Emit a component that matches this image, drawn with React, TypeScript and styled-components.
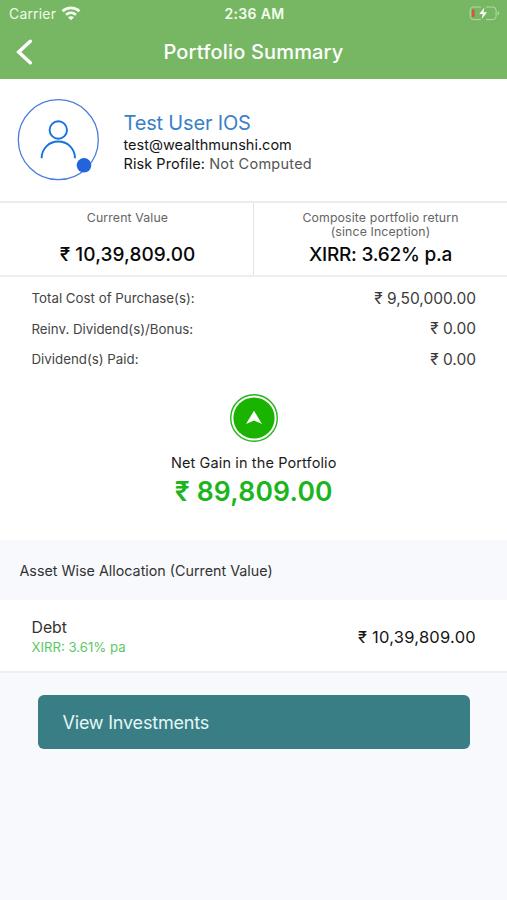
import React from "react";
import styled, { createGlobalStyle } from "styled-components";

const GlobalStyle = createGlobalStyle`
  * { box-sizing: border-box; }
  body { margin: 0; background: #f7f9fd; font-family: Inter, "Liberation Sans", sans-serif; }
`;

const Screen = styled.main`
  width: 507px;
  height: 900px;
  background: #f7f9fd;
  overflow: hidden;
`;

const Header = styled.header`
  height: 79px;
  background: #77b763;
  color: #fff;
`;

const StatusBar = styled.div`
  display: grid;
  grid-template-columns: 1fr auto 1fr;
  align-items: center;
  height: 27px;
  padding: 0 7px 0 9px;
  font-size: 14px;
`;

const Carrier = styled.div`
  display: flex;
  align-items: center;
  gap: 5px;
  letter-spacing: 0.18px;
  color: #eefbe9;
`;

const Clock = styled.time`
  font-weight: 600;
  letter-spacing: 0.35px;
  color: #f3fdee;
`;

const BatterySlot = styled.div`
  display: flex;
  justify-content: flex-end;
`;

const NavBar = styled.div`
  display: grid;
  grid-template-columns: 60px 1fr 60px;
  align-items: center;
  height: 50px;
`;

const BackButton = styled.button`
  display: flex;
  padding: 0 0 0 15px;
  border: 0;
  background: none;
  color: #fff;
`;

const Title = styled.h1`
  margin: 0;
  text-align: center;
  font-size: 20px;
  line-height: 28px;
  font-weight: 550;
  letter-spacing: 0.17px;
`;

const Profile = styled.section`
  display: flex;
  align-items: flex-start;
  height: 122px;
  padding: 20px 17px 0;
  background: #fff;
`;

const Details = styled.div`
  padding: 12px 0 0 24.5px;
  font-size: 14.5px;
  line-height: 19px;
  color: #151515;
`;

const UserName = styled.div`
  font-size: 20px;
  line-height: 25px;
  letter-spacing: -0.18px;
  color: #3a80c9;
`;

const Email = styled.div`
  line-height: 18px;
`;

const Risk = styled.div`
  letter-spacing: 0.06px;
  span { color: #555; letter-spacing: 0.25px; }
`;

const Stats = styled.section`
  display: grid;
  grid-template-columns: 253px 254px;
  height: 76px;
  border-top: 2px solid #ececec;
  border-bottom: 2px solid #eee;
  background: #fff;
`;

const Stat = styled.div`
  display: flex;
  flex-direction: column;
  justify-content: space-between;
  padding: 8px 0 8px 2px;
  text-align: center;
  & + & { padding-left: 0; border-left: 1px solid #e3e3e3; }
`;

const StatLabel = styled.div`
  font-size: 12.3px;
  line-height: 14px;
  letter-spacing: 0.13px;
  color: #656565;
`;

const StatValue = styled.div<{ $spacing: number }>`
  font-size: 19px;
  line-height: 24px;
  font-weight: 550;
  letter-spacing: ${(p) => p.$spacing}px;
  color: #080808;
`;

const Summary = styled.section`
  height: 263px;
  padding: 6px 31px 0 31.5px;
  background: #fff;
`;

const CostRow = styled.div`
  display: flex;
  justify-content: space-between;
  align-items: center;
  height: 30.5px;
`;

const CostLabel = styled.span`
  font-size: 13.3px;
  color: #444;
`;

const CostValue = styled.span`
  font-size: 15.5px;
  color: #3b3b3b;
`;

const Gain = styled.div`
  display: flex;
  flex-direction: column;
  align-items: center;
  padding-top: 18px;
`;

const GainLabel = styled.div`
  margin-top: 9px;
  font-size: 14.5px;
  line-height: 22px;
  letter-spacing: 0.12px;
  color: #1c1c1c;
`;

const GainValue = styled.div`
  font-size: 26.5px;
  line-height: 34px;
  font-weight: 600;
  letter-spacing: 0.2px;
  color: #1db51d;
`;

const SectionHeading = styled.h2`
  display: flex;
  align-items: center;
  height: 60px;
  margin: 0;
  padding: 0 19.5px;
  font-size: 14.3px;
  font-weight: 400;
  color: #333;
`;

const Asset = styled.section`
  display: flex;
  justify-content: space-between;
  height: 73px;
  padding: 18px 31px 0 31.5px;
  border-bottom: 2px solid #efeff1;
  background: #fff;
`;

const AssetName = styled.div`
  font-size: 15.8px;
  line-height: 20px;
  color: #333;
`;

const AssetReturn = styled.div`
  font-size: 13.2px;
  line-height: 19px;
  color: #5cc765;
`;

const AssetValue = styled.div`
  padding-top: 9px;
  font-size: 16.5px;
  line-height: 20px;
  letter-spacing: 0.25px;
  color: #151515;
`;

const ViewButton = styled.button`
  display: block;
  width: 432px;
  height: 54px;
  margin: 22px 0 0 38px;
  padding: 1px 24.5px 0;
  border: 0;
  border-radius: 6px;
  background: #397e85;
  color: #e4f7f6;
  font: 400 18px/53px Inter, "Liberation Sans", sans-serif;
  letter-spacing: -0.2px;
  text-align: left;
`;

const WifiIcon = () => (
  <svg width="20" height="15" viewBox="0 0 20 15" fill="none" stroke="#f5fff1" strokeWidth="2.7">
    <path d="M1.5 5.3C6.3.8 13.7.8 18.5 5.3" />
    <path d="M5 8.7c2.9-2.5 7.1-2.5 10 0" />
    <path d="M10 14.2 7 11.300c1.600-1.500 4.400-1.500 6 0z" fill="#f5fff1" stroke="none" />
  </svg>
);

const BatteryIcon = () => (
  <svg width="31" height="15" viewBox="0 0 31 15" fill="none">
    <path d="M12 1H4.5A3.3 3.3 0 0 0 1.2 4.3v6A3.3 3.3 0 0 0 4.5 13.6H12M17 1h6.8a3.3 3.3 0 0 1 3.3 3.3v6a3.3 3.3 0 0 1-3.3 3.3H17" stroke="#b4dba5" strokeWidth="1" />
    <path d="M28.6 5.2c2 .7 2 3.5 0 4.2z" fill="#b4dba5" />
    <rect x="3" y="3.3" width="2.6" height="7.8" rx=".8" fill="#d9533a" />
    <path d="M15.5 1.5 10.2 8h3.6l-1.1 5 5.3-6.8h-3.6z" fill="#fff" />
  </svg>
);

const BackIcon = () => (
  <svg width="19" height="28" viewBox="0 0 19 28" fill="none">
    <path d="M15.3 3.3 3.7 14l11.6 10.7" stroke="currentColor" strokeWidth="3.5" strokeLinecap="round" strokeLinejoin="miter" />
  </svg>
);

const Avatar = () => (
  <svg width="82" height="82" viewBox="0 0 82 82" fill="none">
    <circle cx="41.3" cy="40.7" r="40" stroke="#4c7ddd" strokeWidth="1.3" />
    <circle cx="41.3" cy="31" r="8.7" stroke="#1672de" strokeWidth="1.9" />
    <path d="M24.6 59.3c0-9.6 7.2-16.8 16.7-16.8S58 49.7 58 59.3" stroke="#1672de" strokeWidth="1.9" />
    <circle cx="67" cy="66.3" r="7.3" fill="#2164dc" />
  </svg>
);

const GainIcon = () => (
  <svg width="50" height="50" viewBox="0 0 50 50">
    <circle cx="25" cy="25" r="23.3" fill="#fff" stroke="#24b51b" strokeWidth="1.4" />
    <circle cx="25" cy="25" r="20.6" fill="#19b300" />
    <path d="M25 17.7 33 31 25 27.400 17 31z" fill="#fff" />
  </svg>
);

const costs = [
  { label: "Total Cost of Purchase(s):", value: "₹ 9,50,000.00" },
  { label: "Reinv. Dividend(s)/Bonus:", value: "₹ 0.00" },
  { label: "Dividend(s) Paid:", value: "₹ 0.00" },
];

export default function App() {
  return (
    <>
      <GlobalStyle />
      <Screen>
        <Header>
          <StatusBar>
            <Carrier>Carrier<WifiIcon /></Carrier>
            <Clock>2:36 AM</Clock>
            <BatterySlot><BatteryIcon /></BatterySlot>
          </StatusBar>
          <NavBar>
            <BackButton aria-label="Back"><BackIcon /></BackButton>
            <Title>Portfolio Summary</Title>
          </NavBar>
        </Header>
        <Profile>
          <Avatar />
          <Details>
            <UserName>Test User IOS</UserName>
            <Email>test@wealthmunshi.com</Email>
            <Risk>Risk Profile: <span>Not Computed</span></Risk>
          </Details>
        </Profile>
        <Stats>
          <Stat>
            <StatLabel>Current Value</StatLabel>
            <StatValue $spacing={0.08}>₹ 10,39,809.00</StatValue>
          </Stat>
          <Stat>
            <StatLabel>Composite portfolio return<br />(since Inception)</StatLabel>
            <StatValue $spacing={-0.23}>XIRR: 3.62% p.a</StatValue>
          </Stat>
        </Stats>
        <Summary>
          {costs.map((cost) => (
            <CostRow key={cost.label}>
              <CostLabel>{cost.label}</CostLabel>
              <CostValue>{cost.value}</CostValue>
            </CostRow>
          ))}
          <Gain>
            <GainIcon />
            <GainLabel>Net Gain in the Portfolio</GainLabel>
            <GainValue>₹ 89,809.00</GainValue>
          </Gain>
        </Summary>
        <SectionHeading>Asset Wise Allocation (Current Value)</SectionHeading>
        <Asset>
          <div>
            <AssetName>Debt</AssetName>
            <AssetReturn>XIRR: 3.61% pa</AssetReturn>
          </div>
          <AssetValue>₹ 10,39,809.00</AssetValue>
        </Asset>
        <ViewButton>View Investments</ViewButton>
      </Screen>
    </>
  );
}
